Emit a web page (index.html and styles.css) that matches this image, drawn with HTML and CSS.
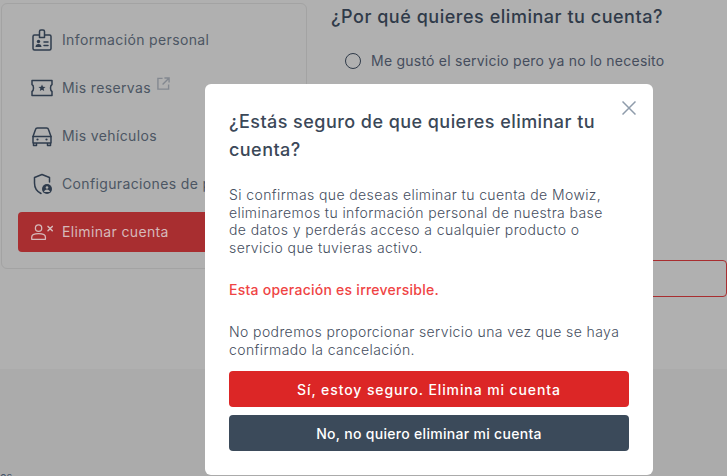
FILE: index.html
```html
<!DOCTYPE html>
<html lang="es">
<head>
<meta charset="utf-8">
<title>Eliminar cuenta</title>
<link rel="stylesheet" href="styles.css">
</head>
<body>
<div class="page">
  <div class="content">
    <nav class="sidebar">
      <a class="nav-item">
        <svg class="nav-icon" viewBox="0 0 24 24"><path d="M9 7H4.500A1.500 1.500 0 0 0 3 8.500V20.500A1.500 1.500 0 0 0 4.500 22H19.500A1.500 1.500 0 0 0 21 20.500V8.500A1.500 1.500 0 0 0 19.500 7H15"/><path d="M9.500 9.500V3.500A1.500 1.500 0 0 1 11 2H13A1.500 1.500 0 0 1 14.500 3.500V9.500Z"/><circle class="solid" cx="8.500" cy="13.500" r="1.700"/><path class="solid" d="M5.500 19c0-2 1.300-3 3-3s3 1 3 3z"/><path d="M14 14h4M14 17.500h4"/></svg>
        <span class="nav-label">Información personal</span>
      </a>
      <a class="nav-item">
        <svg class="nav-icon" viewBox="0 0 24 24"><path d="M2 4.500H22V8.500C20 9.500 20 14.500 22 15.500V19.500H2V15.500C4 14.500 4 9.500 2 8.500Z"/><path class="solid" d="m12 8.500 1 2.300 2.500.2-1.900 1.600.6 2.400-2.200-1.300-2.200 1.300.6-2.400-1.900-1.600 2.500-.2z"/></svg>
        <span class="nav-label">Mis reservas</span>
        <svg class="ext-icon" viewBox="0 0 14 14"><path d="M6 1.500H1V13H12.500V8M8 1H13V6M13 1 6 8"/></svg>
      </a>
      <a class="nav-item">
        <svg class="nav-icon" viewBox="0 0 24 24"><path d="M3 12.500 5.500 5.500A2 2 0 0 1 7.500 4H16.500A2 2 0 0 1 18.500 5.500L21 12.500"/><path d="M3 12.500H21V19H3ZM3.500 19V21.500H6.500V19M17.500 19V21.500H20.500V19"/><circle class="solid" cx="7.500" cy="15.500" r="1.100"/><circle class="solid" cx="16.500" cy="15.500" r="1.100"/></svg>
        <span class="nav-label">Mis vehículos</span>
      </a>
      <a class="nav-item">
        <svg class="nav-icon" viewBox="0 0 24 24"><path d="M19.500 10V5.500L12 2.500 4.500 5.500V11C4.500 16 7.500 19.800 11 21.500"/><circle class="solid" cx="17" cy="17" r="5"/><circle class="cut" cx="17" cy="15.500" r="1.300"/><path class="cut" d="M14 20c.3-1.800 1.500-2.600 3-2.600s2.700.8 3 2.600z"/></svg>
        <span class="nav-label">Configuraciones de privacidad</span>
      </a>
      <a class="nav-item nav-item-active">
        <svg class="nav-icon nav-icon-wide" viewBox="0 0 28 20"><circle cx="10" cy="5.500" r="3.700"/><path d="M2 18.500V16C2 13.500 5 12 10 12S18 13.500 18 16V18.500Z"/><path class="x" d="m21 3.500 5 5M26 3.500l-5 5"/></svg>
        <span class="nav-label">Eliminar cuenta</span>
      </a>
    </nav>
    <main class="main">
      <h2 class="main-title">¿Por qué quieres eliminar tu cuenta?</h2>
      <label class="radio-row"><span class="radio"></span><span>Me gustó el servicio pero ya no lo necesito</span></label>
      <div class="main-spacer"></div>
      <div class="delete-box"></div>
    </main>
  </div>
  <footer class="footer"><span class="footer-text">os</span></footer>
</div>
<div class="overlay">
  <section class="modal">
    <button class="close" aria-label="Cerrar"><svg viewBox="0 0 14 14"><path d="M.5.500 13.500 13.500M13.500.500.500 13.500"/></svg></button>
    <h3 class="modal-title">¿Estás seguro de que quieres eliminar tu cuenta?</h3>
    <p class="modal-text">Si confirmas que deseas eliminar tu cuenta de Mowiz,<br>eliminaremos tu información personal de nuestra base<br>de datos y perderás acceso a cualquier producto o<br>servicio que tuvieras activo.</p>
    <p class="modal-warning">Esta operación es irreversible.</p>
    <p class="modal-text modal-last">No podremos proporcionar servicio una vez que se haya<br>confirmado la cancelación.</p>
    <button class="btn btn-danger">Sí, estoy seguro. Elimina mi cuenta</button>
    <button class="btn btn-dark">No, no quiero eliminar mi cuenta</button>
  </section>
</div>
</body>
</html>
```

FILE: styles.css
```css
* { box-sizing: border-box; }
html, body { margin: 0; height: 100%; overflow: hidden; }
body { font-family: Inter, "Noto Sans", sans-serif; background: #b0b0b0; color: #3f4a59; }
.page { height: 476px; display: flex; flex-direction: column; overflow: hidden; }
.content { height: 369px; flex: none; display: flex; padding: 3px 0 0 1px; }
.sidebar { width: 306px; height: 266px; flex: none; border: 1px solid #a3a3a3; border-radius: 6px; padding: 12px 16px; display: flex; flex-direction: column; }
.nav-item { height: 48px; flex: none; display: flex; align-items: center; gap: 8px; padding-left: 12px; font-size: 14px; letter-spacing: .36px; color: #4c5663; white-space: nowrap; overflow: hidden; }
.nav-label { margin-top: -2px; }
.nav-item-active { height: 40px; margin-top: 4px; background: #a82e30; color: #d6b9ba; border-radius: 4px; }
.nav-icon { width: 24px; height: 24px; flex: none; fill: none; stroke: #2f3c4d; stroke-width: 1.500; stroke-linejoin: round; stroke-linecap: round; }
.nav-icon .solid { fill: #2f3c4d; stroke: none; }
.nav-icon .cut { fill: #b0b0b0; stroke: none; }
.nav-icon-wide { stroke: #d6b9ba; }
.nav-icon-wide .x { stroke-width: 1.800; }
.ext-icon { width: 13px; height: 13px; flex: none; margin: -9px 0 0 -2px; fill: none; stroke: #838890; stroke-width: 1.500; }
.main { margin-left: 24px; flex: 1; min-width: 0; display: flex; flex-direction: column; }
.main-title { margin: 0; font-size: 18px; line-height: 28px; font-weight: 500; letter-spacing: .53px; color: #2f3a49; white-space: nowrap; }
.radio-row { margin: 21px 0 0 14px; display: flex; align-items: center; gap: 10px; font-size: 14px; letter-spacing: .23px; color: #454d5d; white-space: nowrap; }
.radio { width: 16px; height: 16px; flex: none; border: 1.500px solid #2f3a49; border-radius: 50%; }
.main-spacer { height: 191px; }
.delete-box { height: 37px; border: 1px solid #a82e30; border-radius: 4px; }
.footer { flex: 1; background: #ababab; position: relative; font-size: 11px; padding: 102px 0 0; color: #43546a; }
.footer-text { display: block; line-height: 12px; }
.overlay { position: fixed; inset: 0; display: flex; align-items: flex-end; justify-content: flex-start; padding: 0 0 1px 205px; }
.modal { position: relative; width: 448px; height: 391px; background: #fff; border-radius: 6px; padding: 24px; display: flex; flex-direction: column; }
.close { position: absolute; top: 17px; right: 17px; width: 14px; height: 14px; padding: 0; border: 0; background: none; }
.close svg { display: block; width: 14px; height: 14px; fill: none; stroke: #8f9cab; stroke-width: 1.500; }
.modal-title { margin: 0; font-size: 18px; line-height: 28px; font-weight: 500; letter-spacing: .45px; color: #3b4858; }
.modal-text { margin: 22px 0 0; font-size: 14px; line-height: 17.500px; font-weight: 300; letter-spacing: .4px; color: #454e5e; white-space: nowrap; }
.modal-warning { margin: 24px 0 0; font-size: 14px; line-height: 20px; font-weight: 500; letter-spacing: .25px; color: #ef4444; }
.modal-last { margin-top: 23px; }
.btn { height: 36px; flex: none; width: 400px; border: 0; border-radius: 4px; color: #fff; font: 500 14px Inter, "Noto Sans", sans-serif; }
.btn-danger { margin-top: 13px; background: #dc2626; letter-spacing: .9px; }
.btn-dark { margin-top: 8px; background: #3b4a5a; letter-spacing: .3px; }
```
